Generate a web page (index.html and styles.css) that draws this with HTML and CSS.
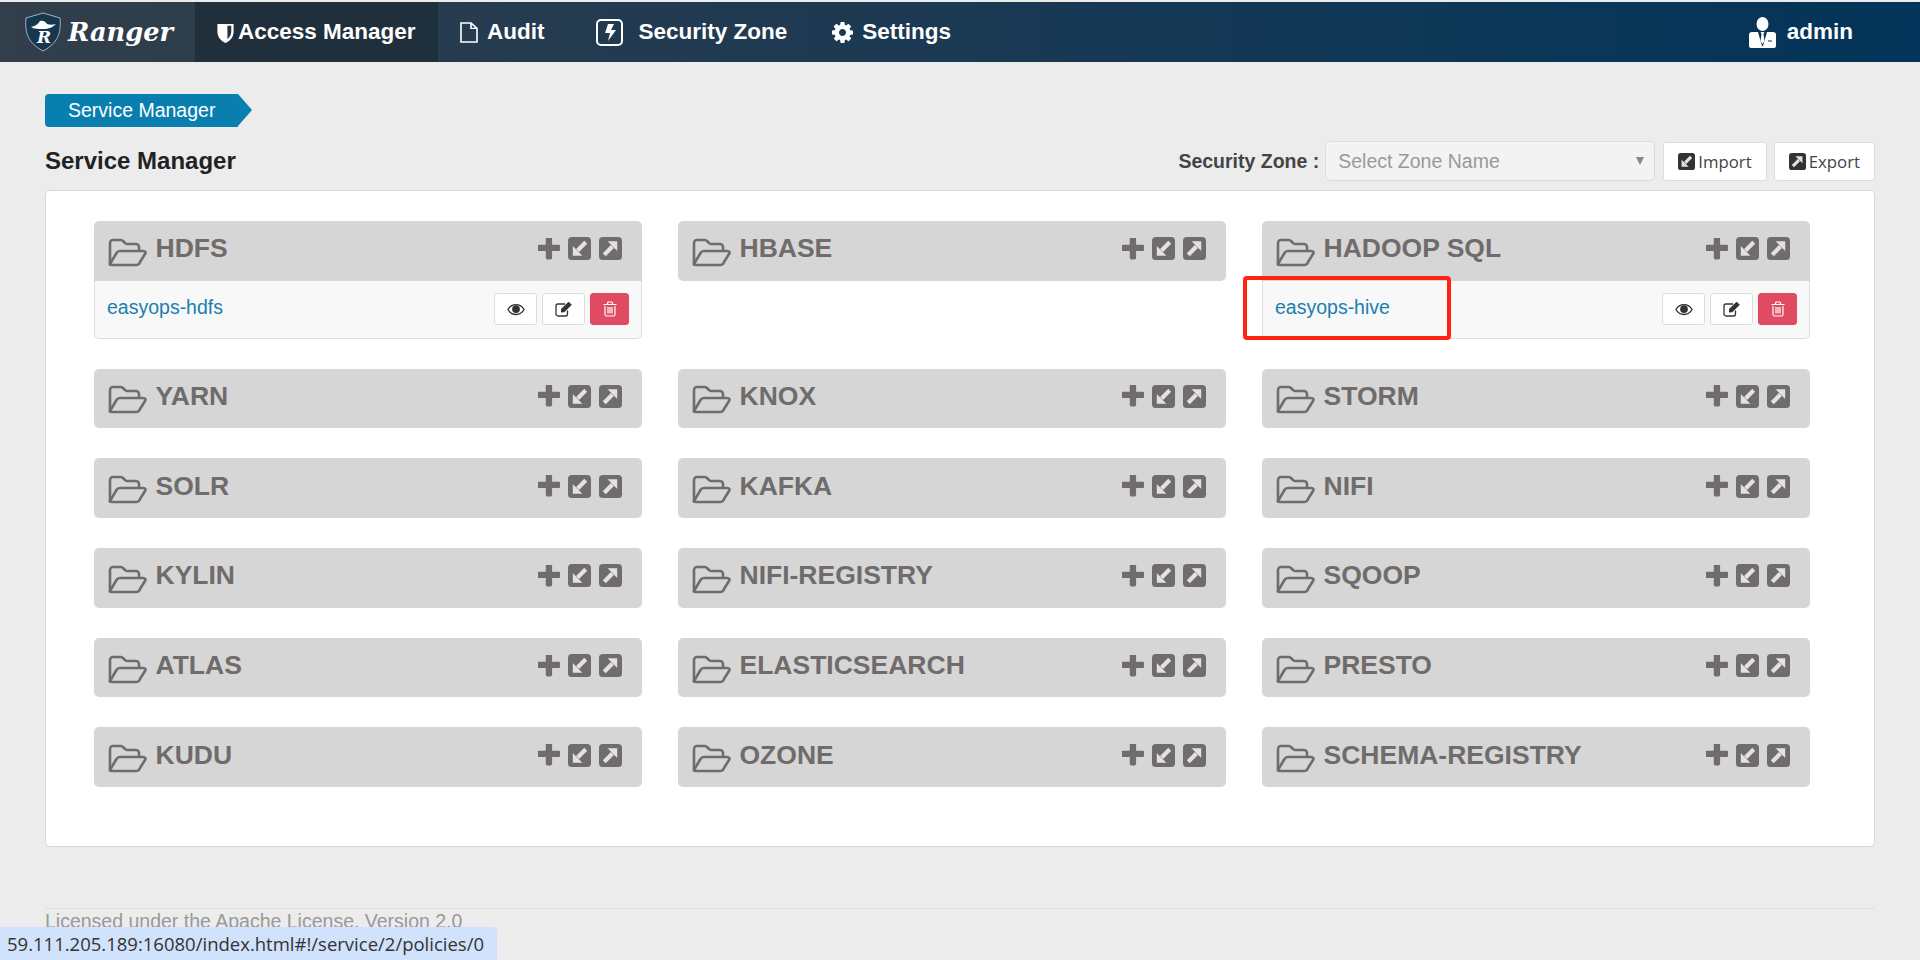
FILE: index.html
```html
<html>
  <head>
    <title>Ranger - Service Manager</title>
    <meta name="viewport" content="width=device-width, initial-scale=1.0">
    <link rel="stylesheet" href="styles.css">
  </head>
  <body>
    <svg class="sprite" width="0" height="0">
      <symbol id="i-folder" viewBox="0 0 40 30">
        <path d="M3 27V6a3 3 0 0 1 3-3h8a3 3 0 0 1 2 1l2 2a3 3 0 0 0 2 1h9a3 3 0 0 1 3 3v3" fill="none" stroke="currentColor" stroke-width="2.6"/>
        <path d="M3 27 9.500 16a4 4 0 0 1 3.500-2h23c2.500 0 3 1.500 2 3l-5 8a4 4 0 0 1-3.500 3H5c-2 0-2.500-.5-2-1z" fill="none" stroke="currentColor" stroke-width="2.600" stroke-linejoin="round"/>
      </symbol>
      <symbol id="i-plus" viewBox="230 230 1340 1340">
        <path fill="currentColor" d="M1600 736v192q0 40-28 68t-68 28h-416v416q0 40-28 68t-68 28h-192q-40 0-68-28t-28-68v-416h-416q-40 0-68-28t-28-68v-192q0-40 28-68t68-28h416v-416q0-40 28-68t68-28h192q40 0 68 28t28 68v416h416q40 0 68 28t28 68z"/>
      </symbol>
      <symbol id="i-import" viewBox="0 0 24 24">
        <rect width="24" height="24" rx="4" fill="currentColor"/>
        <path d="M18.500 5.500 10 14" fill="none" stroke="#e2e2e2" stroke-width="4.400"/>
        <path d="M5 9.500V19.500H15z" fill="#e2e2e2"/>
      </symbol>
      <symbol id="i-export" viewBox="0 0 24 24">
        <rect width="24" height="24" rx="4" fill="currentColor"/>
        <path d="M5.500 18.500 14 10" fill="none" stroke="#e2e2e2" stroke-width="4.400"/>
        <path d="M9 4.500H19V14.500z" fill="#e2e2e2"/>
      </symbol>
      <symbol id="i-eye" viewBox="0 0 20 14">
        <path d="M1 7c2-3.500 5-5.500 9-5.500S17 3.500 19 7c-2 3.500-5 5.500-9 5.500S3 10.500 1 7z" fill="none" stroke="currentColor" stroke-width="1.500"/>
        <circle cx="10" cy="6.500" r="4.300" fill="currentColor"/>
      </symbol>
      <symbol id="i-edit" viewBox="0 0 18 16">
        <path d="M12.500 9.500V13a2 2 0 0 1-2 2H3a2 2 0 0 1-2-2V5a2 2 0 0 1 2-2h7" fill="none" stroke="currentColor" stroke-width="1.300"/>
        <path d="M6 8 13.500 .8 16.800 3.800 9.300 11.300 6 11.500z" fill="currentColor"/>
      </symbol>
      <symbol id="i-trash" viewBox="0 0 14 16">
        <path d="M2 5v8.500a1.500 1.500 0 0 0 1.500 1.500h7a1.500 1.500 0 0 0 1.500-1.500V5M.5 3.500h13M4.500 3.500V2a1 1 0 0 1 1-1h3a1 1 0 0 1 1 1v1.500M5 6v6.500M7 6v6.500M9 6v6.500" fill="none" stroke="currentColor" stroke-width="1.200"/>
      </symbol>
    </svg>

    <nav class="navbar">
      <a class="brand">
        <svg class="brand-shield" viewBox="0 0 38 40">
          <path d="M19 1 36 6c1 12 0 24-17 33C2 30 1 18 2 6z" fill="#17374f" stroke="#9fb4c2" stroke-width="1"/>
          <path d="M7 15c5-1 7-3 9-6 3-1 6 1 7 3 3 1 6 1 9 0-3 3-7 5-13 5-5 0-9 0-12-2z" fill="#fff"/>
        </svg>
        <span class="brand-r">R</span>
        <span class="brand-name">Ranger</span>
      </a>
      <a class="nav-item active">
        <svg class="nav-icon" width="17" height="21" viewBox="0 0 17 22"><path d="M0 2h17v8c0 6-4 10-8.500 12C4 20 0 16 0 10z" fill="#fff"/><path d="M10.500 4H14.500V10c0 3-1.500 6-4 8z" fill="#26323f"/></svg>
        <span>Access Manager</span>
      </a>
      <a class="nav-item audit">
        <svg class="nav-icon" width="18" height="21" viewBox="0 0 18 23" preserveAspectRatio="none"><path d="M1 1h10l6 6v15H1zM11 1v6h6" fill="none" stroke="#fff" stroke-width="1.600"/></svg>
        <span>Audit</span>
      </a>
      <a class="nav-item zone">
        <svg class="nav-icon" width="27" height="27" viewBox="0 0 27 27"><rect x="1" y="1" width="25" height="25" rx="4" fill="none" stroke="#fff" stroke-width="2"/><path d="M12 5h6l-3 6h5l-8 11 2-8H9z" fill="#fff"/></svg>
        <span>Security Zone</span>
      </a>
      <a class="nav-item settings">
        <svg class="nav-icon" width="21" height="21" viewBox="128 128 1536 1536"><path fill="#fff" d="M1152 896q0-106-75-181t-181-75-181 75-75 181 75 181 181 75 181-75 75-181zm512-109v222q0 12-8 23t-20 13l-185 28q-19 54-39 91 35 50 107 138 10 12 10 25t-9 23q-27 37-99 108t-94 71q-12 0-26-9l-138-108q-44 23-91 38-16 136-29 186-7 28-36 28h-222q-14 0-24.500-8.500t-11.500-21.500l-28-184q-49-16-90-37l-141 107q-10 9-25 9-14 0-25-11-126-114-165-168-7-10-7-23 0-12 8-23 15-21 51-66.500t54-70.500q-27-50-41-99l-183-27q-13-2-21-12.500t-8-23.500v-222q0-12 8-23t19-13l186-28q14-46 39-92-40-57-107-138-10-12-10-24 0-10 9-23 26-36 98.500-107.500t94.500-71.500q13 0 26 10l138 107q44-23 91-38 16-136 29-186 7-28 36-28h222q14 0 24.500 8.500t11.500 21.500l28 184q49 16 90 37l142-107q9-9 24-9 13 0 25 10 129 119 165 170 7 8 7 22 0 12-8 23-15 21-51 66.500t-54 70.500q26 50 41 98l183 28q13 2 21 12.500t8 23.500z"/></svg>
        <span>Settings</span>
      </a>
      <a class="nav-item user">
        <svg class="nav-icon" width="27" height="31" viewBox="0 0 27 31"><ellipse cx="13.500" cy="7" rx="6" ry="7" fill="#fff"/><path d="M3 15h6l4 14h1l4-14h6c2 0 3 1 3 3v11c0 1-1 2-2 2H2c-1 0-2-1-2-2V18c0-2 1-3 3-3z" fill="#fff"/><path d="M11.500 15h4l-1 2 1 7-2 3-2-3 1-7z" fill="#fff"/><path d="M19 24h4" stroke="#0a3556" stroke-width="1"/></svg>
        <span>admin</span>
      </a>
    </nav>

    <main class="content">
      <div class="breadcrumb">Service Manager</div>

      <div class="toolbar">
        <h3 class="page-title">Service Manager</h3>
        <label class="zone-label">Security Zone :</label>
        <div class="zone-select">
          <span>Select Zone Name</span>
          <span class="caret"></span>
        </div>
        <button class="btn-tool"><svg width="17" height="17"><use href="#i-import"/></svg>Import</button>
        <button class="btn-tool"><svg width="17" height="17"><use href="#i-export"/></svg>Export</button>
      </div>

      <section class="card">
        <div class="service">
          <div class="service-head">
            <svg class="folder"><use href="#i-folder"/></svg><span class="service-name">HDFS</span>
            <div class="head-actions"><svg class="plus"><use href="#i-plus"/></svg><svg class="square"><use href="#i-import"/></svg><svg class="square"><use href="#i-export"/></svg></div>
          </div>
          <div class="service-body">
            <a class="service-link">easyops-hdfs</a>
            <div class="row-actions">
              <button class="btn-row"><svg width="18" height="13"><use href="#i-eye"/></svg></button>
              <button class="btn-row"><svg width="18" height="16"><use href="#i-edit"/></svg></button>
              <button class="btn-row btn-delete"><svg width="14" height="16"><use href="#i-trash"/></svg></button>
            </div>
          </div>
        </div>

        <div class="service">
          <div class="service-head">
            <svg class="folder"><use href="#i-folder"/></svg><span class="service-name">HBASE</span>
            <div class="head-actions"><svg class="plus"><use href="#i-plus"/></svg><svg class="square"><use href="#i-import"/></svg><svg class="square"><use href="#i-export"/></svg></div>
          </div>
        </div>

        <div class="service">
          <div class="service-head">
            <svg class="folder"><use href="#i-folder"/></svg><span class="service-name">HADOOP SQL</span>
            <div class="head-actions"><svg class="plus"><use href="#i-plus"/></svg><svg class="square"><use href="#i-import"/></svg><svg class="square"><use href="#i-export"/></svg></div>
          </div>
          <div class="service-body">
            <a class="service-link">easyops-hive</a>
            <div class="row-actions">
              <button class="btn-row"><svg width="18" height="13"><use href="#i-eye"/></svg></button>
              <button class="btn-row"><svg width="18" height="16"><use href="#i-edit"/></svg></button>
              <button class="btn-row btn-delete"><svg width="14" height="16"><use href="#i-trash"/></svg></button>
            </div>
          </div>
          <div class="annotation"></div>
        </div>

        <div class="service"><div class="service-head"><svg class="folder"><use href="#i-folder"/></svg><span class="service-name">YARN</span><div class="head-actions"><svg class="plus"><use href="#i-plus"/></svg><svg class="square"><use href="#i-import"/></svg><svg class="square"><use href="#i-export"/></svg></div></div></div>
        <div class="service"><div class="service-head"><svg class="folder"><use href="#i-folder"/></svg><span class="service-name">KNOX</span><div class="head-actions"><svg class="plus"><use href="#i-plus"/></svg><svg class="square"><use href="#i-import"/></svg><svg class="square"><use href="#i-export"/></svg></div></div></div>
        <div class="service"><div class="service-head"><svg class="folder"><use href="#i-folder"/></svg><span class="service-name">STORM</span><div class="head-actions"><svg class="plus"><use href="#i-plus"/></svg><svg class="square"><use href="#i-import"/></svg><svg class="square"><use href="#i-export"/></svg></div></div></div>

        <div class="service"><div class="service-head"><svg class="folder"><use href="#i-folder"/></svg><span class="service-name">SOLR</span><div class="head-actions"><svg class="plus"><use href="#i-plus"/></svg><svg class="square"><use href="#i-import"/></svg><svg class="square"><use href="#i-export"/></svg></div></div></div>
        <div class="service"><div class="service-head"><svg class="folder"><use href="#i-folder"/></svg><span class="service-name">KAFKA</span><div class="head-actions"><svg class="plus"><use href="#i-plus"/></svg><svg class="square"><use href="#i-import"/></svg><svg class="square"><use href="#i-export"/></svg></div></div></div>
        <div class="service"><div class="service-head"><svg class="folder"><use href="#i-folder"/></svg><span class="service-name">NIFI</span><div class="head-actions"><svg class="plus"><use href="#i-plus"/></svg><svg class="square"><use href="#i-import"/></svg><svg class="square"><use href="#i-export"/></svg></div></div></div>

        <div class="service"><div class="service-head"><svg class="folder"><use href="#i-folder"/></svg><span class="service-name">KYLIN</span><div class="head-actions"><svg class="plus"><use href="#i-plus"/></svg><svg class="square"><use href="#i-import"/></svg><svg class="square"><use href="#i-export"/></svg></div></div></div>
        <div class="service"><div class="service-head"><svg class="folder"><use href="#i-folder"/></svg><span class="service-name">NIFI-REGISTRY</span><div class="head-actions"><svg class="plus"><use href="#i-plus"/></svg><svg class="square"><use href="#i-import"/></svg><svg class="square"><use href="#i-export"/></svg></div></div></div>
        <div class="service"><div class="service-head"><svg class="folder"><use href="#i-folder"/></svg><span class="service-name">SQOOP</span><div class="head-actions"><svg class="plus"><use href="#i-plus"/></svg><svg class="square"><use href="#i-import"/></svg><svg class="square"><use href="#i-export"/></svg></div></div></div>

        <div class="service"><div class="service-head"><svg class="folder"><use href="#i-folder"/></svg><span class="service-name">ATLAS</span><div class="head-actions"><svg class="plus"><use href="#i-plus"/></svg><svg class="square"><use href="#i-import"/></svg><svg class="square"><use href="#i-export"/></svg></div></div></div>
        <div class="service"><div class="service-head"><svg class="folder"><use href="#i-folder"/></svg><span class="service-name">ELASTICSEARCH</span><div class="head-actions"><svg class="plus"><use href="#i-plus"/></svg><svg class="square"><use href="#i-import"/></svg><svg class="square"><use href="#i-export"/></svg></div></div></div>
        <div class="service"><div class="service-head"><svg class="folder"><use href="#i-folder"/></svg><span class="service-name">PRESTO</span><div class="head-actions"><svg class="plus"><use href="#i-plus"/></svg><svg class="square"><use href="#i-import"/></svg><svg class="square"><use href="#i-export"/></svg></div></div></div>

        <div class="service"><div class="service-head"><svg class="folder"><use href="#i-folder"/></svg><span class="service-name">KUDU</span><div class="head-actions"><svg class="plus"><use href="#i-plus"/></svg><svg class="square"><use href="#i-import"/></svg><svg class="square"><use href="#i-export"/></svg></div></div></div>
        <div class="service"><div class="service-head"><svg class="folder"><use href="#i-folder"/></svg><span class="service-name">OZONE</span><div class="head-actions"><svg class="plus"><use href="#i-plus"/></svg><svg class="square"><use href="#i-import"/></svg><svg class="square"><use href="#i-export"/></svg></div></div></div>
        <div class="service"><div class="service-head"><svg class="folder"><use href="#i-folder"/></svg><span class="service-name">SCHEMA-REGISTRY</span><div class="head-actions"><svg class="plus"><use href="#i-plus"/></svg><svg class="square"><use href="#i-import"/></svg><svg class="square"><use href="#i-export"/></svg></div></div></div>
      </section>

      <footer class="footer">Licensed under the Apache License, Version 2.0</footer>
    </main>

    <div class="status-bubble">59.111.205.189:16080/index.html#!/service/2/policies/0</div>
  </body>
</html>
```

FILE: styles.css
```css
html, body {
  height: 960px;
  overflow: hidden;
}
body {
  margin: 0;
  padding-top: 2px;
  box-sizing: border-box;
  background-color: #ececec;
  font-family: "Liberation Sans", Arial, sans-serif;
  font-size: 19.5px;
  color: #333;
}
.sprite {
  position: absolute;
}

/* top bar */
.navbar {
  display: flex;
  align-items: center;
  height: 60px;
  background: linear-gradient(90deg, #323e4a 0%, #1f3a52 40%, #023459 100%);
  color: #fff;
  font-weight: bold;
  font-size: 22.5px;
}
.brand {
  position: relative;
  display: flex;
  align-items: center;
  width: 195px;
  height: 60px;
  box-sizing: border-box;
  padding-left: 24px;
}
.brand-shield {
  width: 38px;
  height: 40px;
  flex: none;
}
.brand-r {
  position: absolute;
  left: 37px;
  top: 24px;
  font-family: "DejaVu Serif", serif;
  font-style: italic;
  font-size: 17px;
  line-height: 22px;
  color: #fff;
}
.brand-name {
  margin-left: 6px;
  font-family: "DejaVu Serif", serif;
  font-style: italic;
  font-size: 25.700px;
}
.nav-item {
  display: flex;
  align-items: center;
  height: 60px;
  box-sizing: border-box;
}
.nav-item.active {
  width: 243px;
  padding-left: 22px;
  gap: 4px;
  background-color: rgba(20, 30, 40, 0.45);
}
.nav-item.audit {
  margin-left: 22px;
  gap: 9px;
}
.nav-item.zone {
  margin-left: 52px;
  gap: 15px;
}
.nav-item.settings {
  margin-left: 45px;
  gap: 9px;
}
.nav-item.user {
  margin-left: auto;
  margin-right: 67px;
  gap: 11px;
}
.nav-icon {
  flex: none;
}

/* page */
.content {
  padding: 0 45px;
}
.breadcrumb {
  position: relative;
  width: 193px;
  height: 33px;
  margin-top: 32px;
  box-sizing: border-box;
  padding-left: 23px;
  line-height: 32px;
  background-color: #097fb0;
  border-radius: 4px 0 0 4px;
  color: #fff;
}
.breadcrumb::after {
  content: "";
  position: absolute;
  left: 193px;
  top: 0;
  border-left: 14px solid #097fb0;
  border-top: 16.5px solid transparent;
  border-bottom: 16.5px solid transparent;
}
.toolbar {
  display: flex;
  align-items: center;
  height: 40px;
  margin-top: 14px;
}
.page-title {
  margin: 0 auto 0 0;
  font-size: 24px;
  font-weight: bold;
  color: #222;
}
.zone-label {
  font-weight: bold;
  color: #444;
  margin-right: 6px;
}
.zone-select {
  display: flex;
  align-items: center;
  justify-content: space-between;
  width: 330px;
  height: 40px;
  box-sizing: border-box;
  padding: 0 10px 0 12px;
  background-color: #f3f3f3;
  border: 1px solid #ddd;
  border-radius: 5px;
  color: #999;
}
.caret {
  border-top: 8px solid #888;
  border-left: 4px solid transparent;
  border-right: 4px solid transparent;
}
.btn-tool {
  display: flex;
  align-items: center;
  gap: 3px;
  height: 39px;
  margin-left: 8px;
  padding: 0 14px;
  background-color: #fff;
  border: 1px solid #ddd;
  border-radius: 3px;
  font-family: "Open Sans", sans-serif;
  font-size: 16.800px;
  color: #444;
}
.btn-tool svg {
  color: #333;
}
.btn-tool + .btn-tool {
  margin-left: 7px;
}

/* service blocks */
.card {
  display: grid;
  grid-template-columns: repeat(3, 548px);
  column-gap: 36px;
  row-gap: 30.200px;
  align-items: start;
  align-content: start;
  height: 657px;
  margin-top: 9px;
  box-sizing: border-box;
  padding: 30px 64px 0 48px;
  background-color: #fff;
  border: 1px solid #d8d8d8;
  border-radius: 5px;
}
.service {
  position: relative;
}
.service-head {
  display: flex;
  align-items: center;
  height: 59.500px;
  box-sizing: border-box;
  padding: 0 20px 4px 12.500px;
  background-color: #d6d6d6;
  border-radius: 5px;
  color: #6f6c6b;
}
.service-name {
  margin-left: 9px;
  font-size: 26.500px;
  font-weight: bold;
}
.folder {
  width: 40px;
  height: 30px;
  margin-top: 6px;
  flex: none;
}
.head-actions {
  display: flex;
  align-items: center;
  gap: 8px;
  margin-left: auto;
}
.plus {
  width: 22px;
  height: 22px;
}
.square {
  width: 23px;
  height: 23px;
}
.service-head:has(+ .service-body) {
  border-radius: 5px 5px 0 0;
}
.service-body {
  display: flex;
  align-items: center;
  height: 58px;
  box-sizing: border-box;
  padding: 0 12px 0 12px;
  background-color: #f8f8f8;
  border: 1px solid #ddd;
  border-top: 0;
  border-radius: 0 0 5px 5px;
}
.service-link {
  color: #1a7fae;
  margin-top: -3px;
}
.row-actions {
  display: flex;
  gap: 5px;
  margin-left: auto;
}
.btn-row {
  display: flex;
  align-items: center;
  justify-content: center;
  width: 43px;
  height: 32px;
  padding: 0;
  background-color: #fff;
  border: 1px solid #ddd;
  border-radius: 3px;
  color: #333;
}
.btn-delete {
  width: 39px;
  background-color: #e04b62;
  border-color: #e04b62;
  color: #fff;
}
.annotation {
  position: absolute;
  left: -19px;
  top: 55px;
  width: 208px;
  height: 64px;
  box-sizing: border-box;
  border: 4px solid #ff2314;
  border-radius: 4px;
}

/* footer and link preview */
.footer {
  margin-top: 61px;
  padding-top: 1px;
  border-top: 1px solid #e0e0e0;
  color: #999;
}
.status-bubble {
  position: fixed;
  left: 0;
  bottom: 0;
  width: 497px;
  height: 33px;
  box-sizing: border-box;
  padding-left: 7px;
  line-height: 33px;
  background-color: #d1e2fc;
  border-radius: 0 4px 0 0;
  font-family: "Open Sans", sans-serif;
  font-size: 18.500px;
  color: #333;
  white-space: nowrap;
}
```
